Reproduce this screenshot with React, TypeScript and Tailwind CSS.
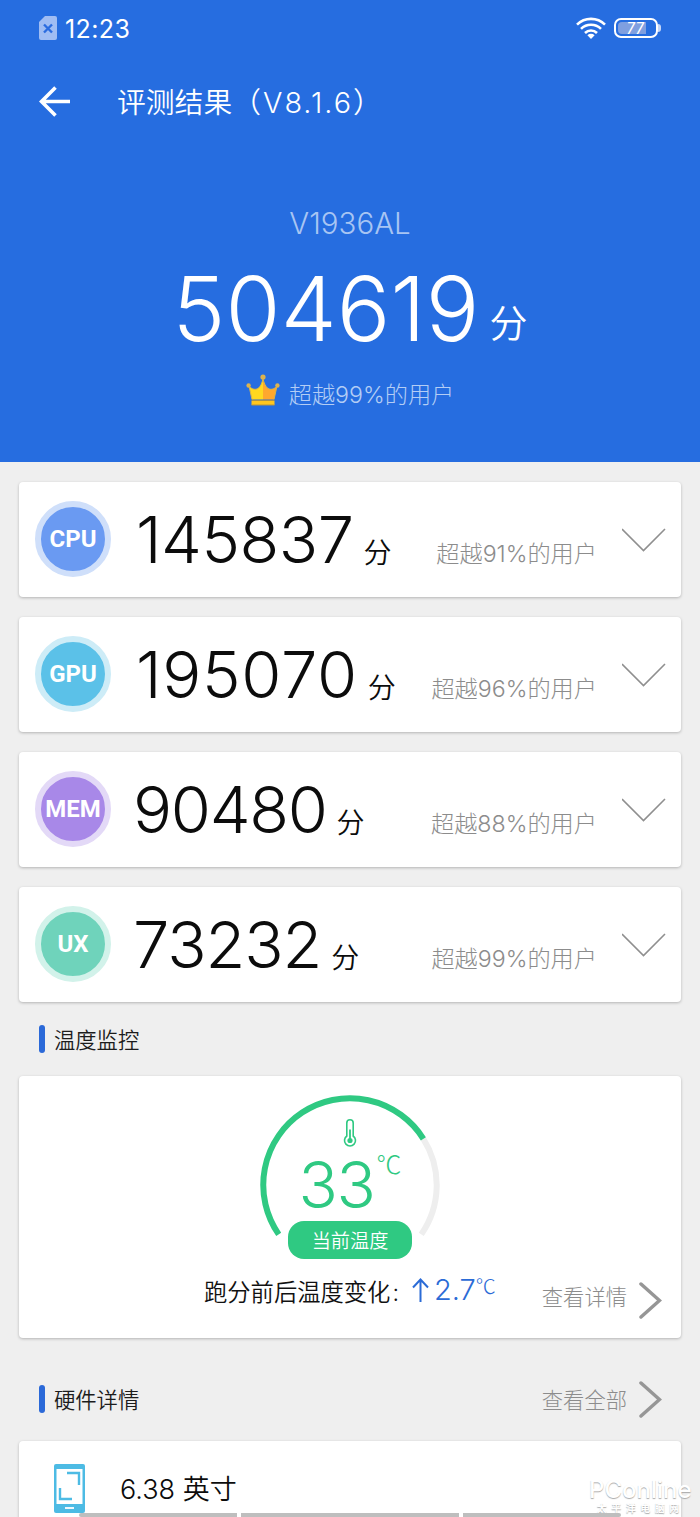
interface ScoreItem {
  label: string;
  score: string;
  percent: string;
  badge: string;
  digits: string;
}

const scores: ScoreItem[] = [
  {
    label: "CPU",
    score: "145837",
    percent: "91%",
    badge: "bg-[#6a9af2] border-[#cfdffa]",
    digits: "pl-[3px] tracking-[-0.5px]",
  },
  {
    label: "GPU",
    score: "195070",
    percent: "96%",
    badge: "bg-[#5bc1e8] border-[#cdecf7]",
    digits: "pl-[3px] tracking-[0.7px]",
  },
  {
    label: "MEM",
    score: "90480",
    percent: "88%",
    badge: "bg-[#a888e8] border-[#e3d9f7]",
    digits: "tracking-[-1.3px]",
  },
  {
    label: "UX",
    score: "73232",
    percent: "99%",
    badge: "bg-[#6fd3bb] border-[#d2f2ea]",
    digits: "tracking-[-1.1px]",
  },
];

function StatusBar() {
  return (
    <div className="flex h-14 items-center justify-between pl-[39px] pr-[39px]">
      <div className="flex items-center">
        <svg width="18" height="24" viewBox="0 0 18 24">
          <path d="M6 0h10a2 2 0 0 1 2 2v20a2 2 0 0 1-2 2H2a2 2 0 0 1-2-2V6z" fill="#a0bdf3" />
          <path d="M5 8.5l8 8M13 8.5l-8 8" stroke="#2b6ce0" strokeWidth="2.4" />
        </svg>
        <span className="ml-2 mt-[3px] text-[25px] font-normal leading-none tracking-[0.4px]">12:23</span>
      </div>
      <div className="flex items-center">
        <svg width="30" height="22" viewBox="0 0 30 22" fill="none" stroke="#fff" strokeWidth="2.6">
          <path d="M1 7.6a20 20 0 0 1 28 0" />
          <path d="M5 11.8a14.2 14.2 0 0 1 20 0" />
          <path d="M9 16a8.6 8.6 0 0 1 12 0" />
          <path d="M11.4 18.2a5.2 5.2 0 0 1 7.2 0L15 22z" fill="#fff" stroke="none" />
        </svg>
        <div className="ml-[8px] flex h-[20px] w-[44px] items-center rounded-[7px] border-2 border-white p-[2px]">
          <div className="flex h-full w-[28px] items-center justify-end rounded-l-[4px] bg-[#7f9fe0] pr-[2px]">
            <span className="font-['Noto_Sans'] text-[16px] font-normal italic leading-none">77</span>
          </div>
        </div>
        <div className="h-[8px] w-[3px] rounded-r-sm bg-[#c4d6f8]" />
      </div>
    </div>
  );
}

function CrownIcon() {
  return (
    <svg width="34" height="32" viewBox="0 0 34 32">
      <path d="M6 25.5L3 12c3 3.5 6.5 4 9 2.5C14.5 12.5 16 9 17 5v20.5z" fill="#ffd91f" />
      <path d="M28 25.5L31 12c-3 3.5-6.5 4-9 2.5C19.5 12.5 18 9 17 5v20.5z" fill="#ffa82e" />
      <path
        d="M6 25.5L3 12c3 3.5 6.5 4 9 2.5C14.5 12.5 16 9 17 5c1 4 2.5 7.5 5 9.5 2.5 1.5 6 1 9-2.5l-3 13.5"
        fill="none"
        stroke="#d9b54a"
        strokeWidth="1"
      />
      <rect x="5.5" y="27" width="23" height="4" fill="#ffc61f" />
      <path d="M5.5 26.4h23M5.5 31h23" stroke="#b5963f" strokeWidth="1" />
      <circle cx="17" cy="3" r="2.6" fill="#dcb34e" />
      <circle cx="2.6" cy="11.5" r="2.2" fill="#dcb34e" />
      <circle cx="31.4" cy="11.5" r="2.2" fill="#dcb34e" />
    </svg>
  );
}

function ChevronRight() {
  return (
    <svg width="23" height="37" viewBox="0 0 23 37" fill="none">
      <path d="M2 2l18.5 16.5L2 35" stroke="#969696" strokeWidth="3.5" strokeLinecap="round" />
    </svg>
  );
}

function ScoreCard({ item }: { item: ScoreItem }) {
  return (
    <div className="flex h-[115px] items-center rounded bg-white pb-[1px] pl-[16px] pr-[15px] shadow-[0_1px_3px_rgba(0,0,0,0.25)]">
      <div
        className={`flex h-[76px] w-[76px] shrink-0 items-center justify-center rounded-full border-[6px] font-['Roboto'] text-[24px] font-bold text-white ${item.badge}`}
      >
        {item.label}
      </div>
      <div className="ml-[22px] flex flex-1 items-end justify-between text-[#0c0c0c]">
        <div className="flex items-baseline">
          <span className={`text-[65px] leading-none ${item.digits}`}>{item.score}</span>
          <span className="ml-[10px] text-[28px] leading-none">分</span>
        </div>
        <span className="mb-[5px] text-[23.2px] font-light leading-none text-[#8c8c8c]">超越{item.percent}的用户</span>
      </div>
      <svg className="ml-[25px] mt-[2px] shrink-0" width="44" height="24" viewBox="0 0 44 24" fill="none">
        <path d="M0 1L21.5 22.5 43 1" stroke="#8f8f8f" strokeWidth="1.6" />
      </svg>
    </div>
  );
}

function SectionTitle({ title }: { title: string }) {
  return (
    <div className="flex items-center">
      <div className="h-[28px] w-[6px] rounded-full bg-[#2b69d8]" />
      <span className="ml-[9px] mt-[3px] text-[21.3px] leading-none text-[#1c1c1c]">{title}</span>
    </div>
  );
}

function MoreLink({ label, className }: { label: string; className: string }) {
  return (
    <div className="flex items-center text-[21.3px] font-light leading-none text-[#8c8c8c]">
      <span className={`mr-[12px] ${className}`}>{label}</span>
      <ChevronRight />
    </div>
  );
}

function TemperatureGauge() {
  return (
    <div className="relative flex h-[164px] w-[180px] flex-col items-center">
      <svg className="absolute inset-0" width="180" height="164" viewBox="0 0 180 164" fill="none" strokeWidth="6">
        <path d="M163.36 43.8A86.7 86.7 0 0 1 161.28 139.36" stroke="#eeeeee" />
        <path d="M18.72 139.36A86.7 86.7 0 1 1 163.36 43.8" stroke="#2fc982" />
      </svg>
      <svg className="mt-[24px]" width="14" height="28" viewBox="0 0 14 28" fill="none" stroke="#2fc982" strokeWidth="1.6">
        <path d="M3.8 17V4a3.2 3.2 0 0 1 6.4 0v13a5.5 5.5 0 1 1-6.4 0z" />
        <path d="M7 10.5V21" strokeWidth="1.8" />
        <circle cx="7" cy="21.5" r="2.6" fill="#2fc982" stroke="none" />
      </svg>
      <div className="flex items-start text-[#2fc982]">
        <span className="mt-[5px] text-[65px] leading-none tracking-[-1.5px]">33</span>
        <span className="ml-[2px] mt-[4px] font-['Noto_Sans_CJK_SC'] text-[25px] font-light leading-none">℃</span>
      </div>
      <div className="absolute bottom-0 flex h-[38px] w-[124px] items-center justify-center rounded-[16px] bg-[#2fc982] pt-[3px] text-[19.2px] leading-none text-white">
        当前温度
      </div>
    </div>
  );
}

export default function App() {
  return (
    <div className="relative h-[1517px] w-[700px] overflow-hidden whitespace-nowrap bg-[#efefef] font-['Inter','Noto_Sans_CJK_SC',sans-serif] font-[350]">
      <header className="h-[462px] bg-[#266de0] text-white">
        <StatusBar />
        <div className="flex h-[90px] items-center pl-[39px]">
          <svg width="31" height="31" viewBox="0 0 31 31" fill="none" stroke="#fff" strokeWidth="3.6">
            <path d="M16.5 1.5L2.5 15.5l14 14M2.5 15.5H31" />
          </svg>
          <h1 className="ml-[47px] mt-[5px] text-[28.8px] leading-none">
            评测结果（<span className="ml-[2px] tracking-[2px]">V8.1.6</span>）
          </h1>
        </div>
        <div className="flex flex-col items-center">
          <p className="mt-[63px] text-[29.5px] font-light leading-none text-[#a8c5f3]">V1936AL</p>
          <div className="mt-[25px] flex items-end">
            <span className="text-[89px] leading-none tracking-[0.2px]">504619</span>
            <span className="mb-[11px] ml-[10px] text-[38px] leading-none">分</span>
          </div>
          <div className="mt-[20px] flex items-center">
            <CrownIcon />
            <span className="ml-[9px] mt-[11px] text-[23.2px] font-light leading-none text-[#b4cdf5]">超越99%的用户</span>
          </div>
        </div>
      </header>

      <main className="px-[19px] pt-[20px]">
        <div className="flex flex-col gap-[20px]">
          {scores.map((item) => (
            <ScoreCard key={item.label} item={item} />
          ))}
        </div>

        <div className="flex h-[74px] items-center pl-[20px]">
          <SectionTitle title="温度监控" />
        </div>

        <section className="flex h-[262px] flex-col items-center rounded bg-white pt-[19px] shadow-[0_1px_3px_rgba(0,0,0,0.25)]">
          <TemperatureGauge />
          <div className="flex w-full items-start justify-between pl-[185px] pr-[19px] pt-[16px]">
            <div className="flex items-center text-[23.3px] leading-none text-[#111]">
              <span className="mt-[6px]">
                跑分前后温度变化<span className="ml-[2px]">:</span>
              </span>
              <svg className="ml-[13px]" width="17" height="24" viewBox="0 0 17 24" fill="none" stroke="#2b6bd6" strokeWidth="2">
                <path d="M8.5 24V1.5M1 9.5l7.5-8 7.5 8" />
              </svg>
              <span className="ml-[5px] text-[29px] leading-none text-[#2b6bd6]">2.7</span>
              <span className="mb-[8px] font-['Noto_Sans_CJK_SC'] text-[20px] font-light leading-none text-[#2b6bd6]">℃</span>
            </div>
            <div className="mt-[7px]">
              <MoreLink label="查看详情" className="mb-[5px]" />
            </div>
          </div>
        </section>

        <div className="flex h-[103px] items-center justify-between pl-[20px] pr-[19px] pt-[19px]">
          <SectionTitle title="硬件详情" />
          <MoreLink label="查看全部" className="mt-[4px]" />
        </div>

        <section className="flex h-[100px] items-start rounded bg-white pl-[35px] pt-[23px] shadow-[0_1px_3px_rgba(0,0,0,0.25)]">
          <svg width="31" height="49" viewBox="0 0 31 49">
            <rect width="31" height="49" rx="2" fill="#4dbbe4" />
            <rect x="2.5" y="5" width="26" height="35" fill="#fff" />
            <path d="M13 9h12v12M6 24v11h12" fill="none" stroke="#4dbbe4" strokeWidth="2.4" />
            <path d="M11 44h9" stroke="#fff" strokeWidth="1.8" />
          </svg>
          <span className="ml-[35px] mt-[12px] text-[27px] leading-none text-[#0c0c0c]">6.38 英寸</span>
        </section>
      </main>

      {/* watermark */}
      <div className="absolute left-[589px] top-[1478px] flex flex-col items-center text-white [text-shadow:0_1px_1px_#aaa]">
        <span className="text-[24px] font-medium leading-none">PConline</span>
        <span className="mt-px text-[10px] font-bold leading-none tracking-[4.5px]">太平洋电脑网</span>
      </div>

      {/* system gesture hints */}
      <div className="absolute bottom-0 left-[79px] flex h-[4px] gap-[4px]">
        <div className="w-[158px] rounded-l-full bg-[#bebebe]" />
        <div className="w-[218px] bg-[#bebebe]" />
        <div className="w-[158px] rounded-r-full bg-[#bebebe]" />
      </div>
    </div>
  );
}
